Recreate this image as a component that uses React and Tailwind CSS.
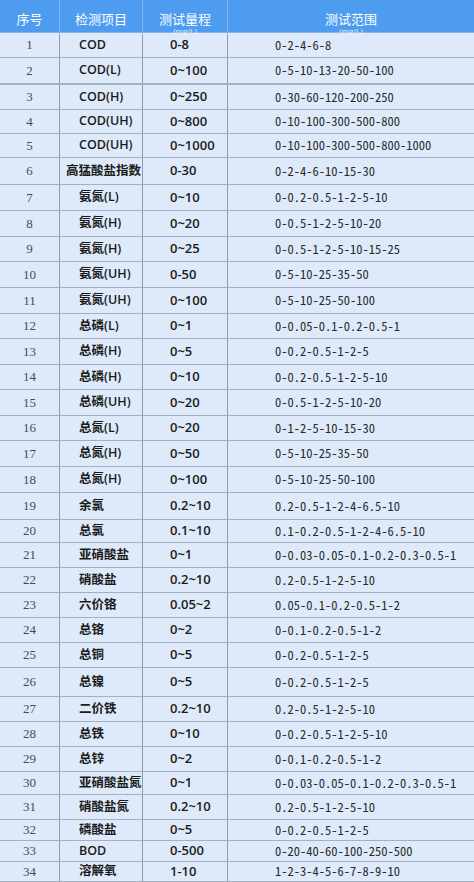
const rows = [
  ['1', 'COD', '0-8', '0-2-4-6-8', 'h-[25px]'],
  ['2', 'COD(L)', '0~100', '0-5-10-13-20-50-100', 'h-[27px] border-b-2'],
  ['3', 'COD(H)', '0~250', '0-30-60-120-200-250', 'h-[25px]'],
  ['4', 'COD(UH)', '0~800', '0-10-100-300-500-800', 'h-[24px]'],
  ['5', 'COD(UH)', '0~1000', '0-10-100-300-500-800-1000', 'h-[24px]'],
  ['6', '高猛酸盐指数', '0-30', '0-2-4-6-10-15-30', 'h-[27px]'],
  ['7', '氨氮(L)', '0~10', '0-0.2-0.5-1-2-5-10', 'h-[26px]'],
  ['8', '氨氮(H)', '0~20', '0-0.5-1-2-5-10-20', 'h-[26px]'],
  ['9', '氨氮(H)', '0~25', '0-0.5-1-2-5-10-15-25', 'h-[25px]'],
  ['10', '氨氮(UH)', '0-50', '0-5-10-25-35-50', 'h-[26px]'],
  ['11', '氨氮(UH)', '0~100', '0-5-10-25-50-100', 'h-[26px]'],
  ['12', '总磷(L)', '0~1', '0-0.05-0.1-0.2-0.5-1', 'h-[25px]'],
  ['13', '总磷(H)', '0~5', '0-0.2-0.5-1-2-5', 'h-[26px]'],
  ['14', '总磷(H)', '0~10', '0-0.2-0.5-1-2-5-10', 'h-[25px]'],
  ['15', '总磷(UH)', '0~20', '0-0.5-1-2-5-10-20', 'h-[26px]'],
  ['16', '总氮(L)', '0~20', '0-1-2-5-10-15-30', 'h-[25px]'],
  ['17', '总氮(H)', '0~50', '0-5-10-25-35-50', 'h-[26px]'],
  ['18', '总氮(H)', '0~100', '0-5-10-25-50-100', 'h-[26px]'],
  ['19', '余氯', '0.2~10', '0.2-0.5-1-2-4-6.5-10', 'h-[27px]'],
  ['20', '总氯', '0.1~10', '0.1-0.2-0.5-1-2-4-6.5-10', 'h-[23px]'],
  ['21', '亚硝酸盐', '0~1', '0-0.03-0.05-0.1-0.2-0.3-0.5-1', 'h-[25px]'],
  ['22', '硝酸盐', '0.2~10', '0.2-0.5-1-2-5-10', 'h-[25px]'],
  ['23', '六价铬', '0.05~2', '0.05-0.1-0.2-0.5-1-2', 'h-[25px]'],
  ['24', '总铬', '0~2', '0-0.1-0.2-0.5-1-2', 'h-[25px]'],
  ['25', '总铜', '0~5', '0-0.2-0.5-1-2-5', 'h-[25px]'],
  ['26', '总镍', '0~5', '0-0.2-0.5-1-2-5', 'h-[29px]'],
  ['27', '二价铁', '0.2~10', '0.2-0.5-1-2-5-10', 'h-[25px]'],
  ['28', '总铁', '0~10', '0-0.2-0.5-1-2-5-10', 'h-[25px]'],
  ['29', '总锌', '0~2', '0-0.1-0.2-0.5-1-2', 'h-[25px]'],
  ['30', '亚硝酸盐氮', '0~1', '0-0.03-0.05-0.1-0.2-0.3-0.5-1', 'h-[23px]'],
  ['31', '硝酸盐氮', '0.2~10', '0.2-0.5-1-2-5-10', 'h-[25px]'],
  ['32', '磷酸盐', '0~5', '0-0.2-0.5-1-2-5', 'h-[21px]'],
  ['33', 'BOD', '0-500', '0-20-40-60-100-250-500', 'h-[21px]'],
  ['34', '溶解氧', '1-10', '1-2-3-4-5-6-7-8-9-10', 'h-[20px]'],
];

const HeaderCell = ({ title, sub, last }) => (
  <div className={`flex flex-col items-center pt-[12px] ${last ? '' : 'border-r border-[#86b6ea]'}`}>
    <span className="block text-[13px] leading-[13px] text-white">{title}</span>
    {sub && <span className="block text-[8px] leading-[8px] mt-[2px] text-[#e3eefc] font-['Open_Sans',sans-serif]">{sub}</span>}
  </div>
);

export default function App() {
  return (
    <div className="w-[474px] h-[882px] overflow-hidden bg-[#deeaf9] font-['Noto_Sans_CJK_SC',sans-serif]">
      <div className="relative z-10 grid grid-cols-[60px_83px_85px_1fr] h-[33px] bg-[#4d9cf0] border-b border-[#8fb4dc]">
        <HeaderCell title="序号" />
        <HeaderCell title="检测项目" />
        <HeaderCell title="测试量程" sub="(mg/L)" />
        <HeaderCell title="测试范围" sub="(mg/L)" last />
      </div>

      {rows.map(([no, item, scale, range, rowClass]) => (
        <div key={no} className={`grid grid-cols-[60px_83px_85px_1fr] border-b border-[#a4b0bd] ${rowClass}`}>
          <div className="flex items-center justify-center border-r border-[#8e9cab] text-[13px] text-[#4a4a4a] font-['Liberation_Serif',serif]">
            {no}
          </div>
          <div
            className={`flex items-center whitespace-nowrap border-r border-[#8e9cab] text-[12.5px] font-semibold text-[#1a1a1a] font-['Open_Sans','Noto_Sans_CJK_SC',sans-serif] ${
              no === '6' ? 'pl-[6px]' : 'pl-[19px]'
            }`}
          >
            {item}
          </div>
          <div className="flex items-center pl-[27px] border-r border-[#8e9cab] text-[13px] font-semibold text-[#1a1a1a] font-['Open_Sans','Noto_Sans_CJK_SC',sans-serif]">
            {scale}
          </div>
          <div className="flex items-center pl-[47px] whitespace-nowrap text-[12.5px] text-[#2a2a2a] font-['Noto_Sans_Mono_CJK_SC','Noto_Sans_CJK_SC',monospace]">
            {range}
          </div>
        </div>
      ))}
    </div>
  );
}
